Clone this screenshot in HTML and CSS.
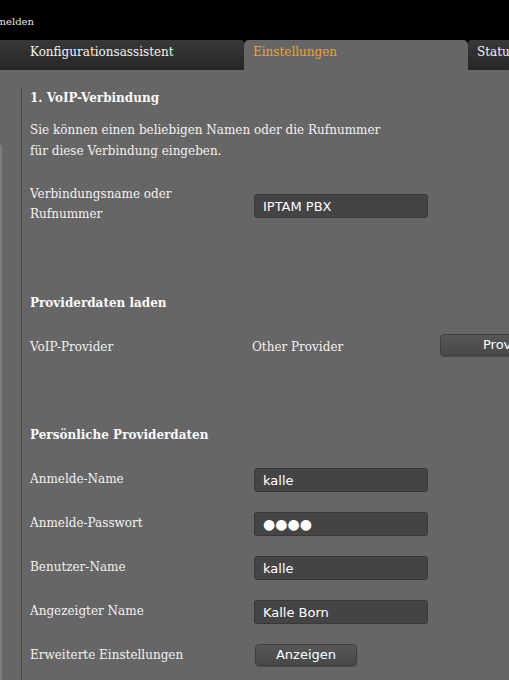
FILE: index.html
```html
<!DOCTYPE html>
<html lang="de">
<head>
<meta charset="utf-8">
<title>Einstellungen</title>
<link rel="stylesheet" href="styles.css">
</head>
<body>
<header class="topbar">
  <span class="logout">Abmelden</span>
</header>
<nav class="tabs">
  <div class="tab tab-first">Konfigurationsassistent</div>
  <div class="tab tab-active">Einstellungen</div>
  <div class="tab tab-last">Status</div>
</nav>
<div class="page">
  <aside class="sidenav"><div class="sidenav-strip"></div></aside>
  <main class="content">
    <h1 class="heading">1. VoIP-Verbindung</h1>
    <p class="intro">Sie können einen beliebigen Namen oder die Rufnummer<br>für diese Verbindung eingeben.</p>

    <div class="row row-first">
      <label class="label">Verbindungsname oder<br>Rufnummer</label>
      <input class="field field-offset" type="text" value="IPTAM PBX" readonly>
    </div>

    <h2 class="heading section">Providerdaten laden</h2>
    <div class="row row-provider">
      <span class="label label-pad">VoIP-Provider</span>
      <span class="value label-pad">Other Provider</span>
      <button class="btn btn-provider" type="button">Provider wählen</button>
    </div>

    <h2 class="heading section section-personal">Persönliche Providerdaten</h2>
    <div class="form">
      <div class="row">
        <label class="label">Anmelde-Name</label>
        <input class="field" type="text" value="kalle" readonly>
      </div>
      <div class="row">
        <label class="label">Anmelde-Passwort</label>
        <input class="field field-dots" type="text" value="●●●●" readonly>
      </div>
      <div class="row">
        <label class="label">Benutzer-Name</label>
        <input class="field" type="text" value="kalle" readonly>
      </div>
      <div class="row">
        <label class="label">Angezeigter Name</label>
        <input class="field" type="text" value="Kalle Born" readonly>
      </div>
      <div class="row">
        <label class="label">Erweiterte Einstellungen</label>
        <button class="btn btn-show" type="button">Anzeigen</button>
      </div>
    </div>
  </main>
</div>
</body>
</html>
```

FILE: styles.css
```css
html, body {
  margin: 0;
  padding: 0;
}
body {
  width: 509px;
  height: 680px;
  overflow: hidden;
  background: #666666;
  color: #f2f2f2;
  font-family: "DejaVu Serif", serif;
  font-size: 12px;
}
.topbar {
  height: 40px;
  background: #000;
  overflow: hidden;
}
.logout {
  display: block;
  margin-left: -17px;
  padding-top: 15px;
  font-size: 10px;
  line-height: 14px;
  color: #e6e6e6;
}
.tabs {
  display: flex;
  height: 30px;
  background: #000;
  white-space: nowrap;
  overflow: hidden;
}
.tab {
  flex: none;
  box-sizing: border-box;
  height: 30px;
  padding: 3px 0 0 9px;
  line-height: 18px;
  font-size: 12px;
  color: #f4f4f4;
  background: linear-gradient(#383838, #262626);
}
.tab-first {
  width: 244px;
  padding-left: 30px;
  border-radius: 0 4px 0 0;
}
.tab-active {
  width: 224px;
  background: #666666;
  color: #f0a030;
  border-radius: 5px 5px 0 0;
}
.tab-last {
  width: 60px;
  border-radius: 4px 0 0 0;
}
.page {
  display: flex;
  min-height: 610px;
}
.sidenav {
  flex: none;
  width: 21px;
  border-right: 1px solid #474747;
  margin-top: 18px;
}
.sidenav-strip {
  margin-top: 57px;
  height: 600px;
  width: 2px;
  background: #7c7c7c;
}
.content {
  flex: 1;
  padding: 18px 0 0 8px;
}
.heading {
  margin: 0;
  font-size: 12px;
  font-weight: bold;
  line-height: 20px;
  color: #fafafa;
}
.section {
  margin-top: 69px;
}
.section-personal {
  margin-top: 68px;
}
.intro {
  margin: 12px 0 0;
  line-height: 21px;
}
.row {
  display: grid;
  grid-template-columns: 224px auto;
  align-items: start;
}
.row-first {
  margin-top: 22px;
}
.row-provider {
  margin-top: 21px;
  grid-template-columns: 222px 188px auto;
}
.label {
  line-height: 20px;
  white-space: nowrap;
}
.form .label {
  padding-top: 1px;
}
.label-pad {
  padding-top: 3px;
}
.value {
  line-height: 20px;
  white-space: nowrap;
}
.form {
  margin-top: 23px;
  display: flex;
  flex-direction: column;
  gap: 20px;
}
.field {
  box-sizing: border-box;
  width: 174px;
  height: 24px;
  margin: 0;
  padding: 0 8px;
  border: 1px solid #383838;
  border-radius: 3px;
  background: #444444;
  color: #ffffff;
  font-family: "DejaVu Sans", sans-serif;
  font-size: 13px;
  outline: none;
}
.field-offset {
  margin-top: 10px;
}
.field-dots {
  font-size: 14px;
}
.btn {
  box-sizing: border-box;
  height: 22px;
  margin: 0;
  border: 1px solid #3e3e3e;
  border-radius: 4px;
  background: linear-gradient(#575757, #484848);
  color: #ffffff;
  font-family: "DejaVu Sans", sans-serif;
  font-size: 13px;
  line-height: 20px;
  white-space: nowrap;
  box-shadow: 0 1px 1px rgba(0, 0, 0, 0.25);
}
.btn-provider {
  padding: 0 42px;
  text-align: left;
}
.btn-show {
  width: 102px;
  margin-left: 1px;
  padding: 0;
}
```
